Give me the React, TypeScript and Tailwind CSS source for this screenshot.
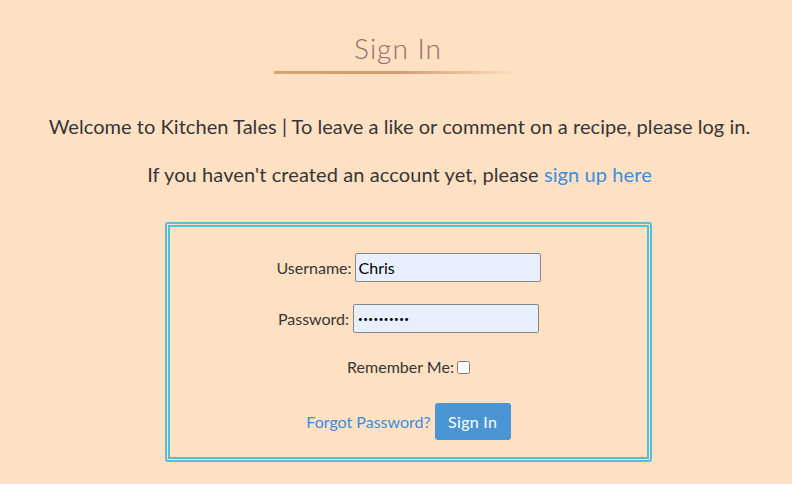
import React from "react";

export default function App() {
  return (
    <div className="w-[792px] h-[484px] bg-[#fde1c2] overflow-hidden text-[#363636]" style={{ fontFamily: '"Lato", "Open Sans", sans-serif' }}>
      <div className="flex flex-col items-center pt-[30px]">
        <h1 className="text-[28px] leading-[36px] font-light text-[#9b6a6a] tracking-[1px] ml-[4px]">Sign In</h1>
        <div className="mt-[5px] ml-[2px] w-[246px] h-[3px] bg-gradient-to-r from-[#dca46a] via-[#d49a72] to-transparent" />
        <p className="mt-[39px] text-[20px] leading-[26px] tracking-[0.05px] ml-[7px]">Welcome to Kitchen Tales | To leave a like or comment on a recipe, please log in.</p>
        <p className="mt-[22px] text-[20px] leading-[26px] tracking-[0.1px] ml-[7px]">
          If you haven't created an account yet, please <a className="text-[#3b8de0]" href="#">sign up here</a>
        </p>
      </div>
      <div className="ml-[165px] mt-[35px] w-[487px] h-[240px] border-[5px] border-double border-[#4fc1de] rounded-[3px] flex flex-col items-center pt-[26px] text-[16px]">
        <div className="flex items-center h-[29px]">
          <span className="mr-[3px]">Username:</span>
          <input className="w-[186px] h-[29px] bg-[#e8f0fe] border border-[#888] rounded-[2px] px-[3px] text-[16px] text-black outline-none" defaultValue="Chris" />
        </div>
        <div className="flex items-center h-[29px] mt-[22px]">
          <span className="mr-[4px]">Password:</span>
          <input type="password" className="w-[186px] h-[29px] bg-[#e8f0fe] border border-[#888] rounded-[2px] px-[4px] text-[8px] text-black outline-none tracking-[0.5px]" defaultValue="chrispass1" />
        </div>
        <div className="flex items-center mt-[22px]">
          <span className="mr-[3px]">Remember Me:</span>
          <input type="checkbox" className="w-[13px] h-[13px]" />
        </div>
        <div className="flex items-center mt-[24px]">
          <a href="#" className="text-[#3b8de0] mr-[4px]">Forgot Password?</a>
          <button className="w-[76px] h-[37px] bg-[#4a96d4] text-white rounded-[3px] text-[16px] tracking-[0.3px]">Sign In</button>
        </div>
      </div>
    </div>
  );
}
